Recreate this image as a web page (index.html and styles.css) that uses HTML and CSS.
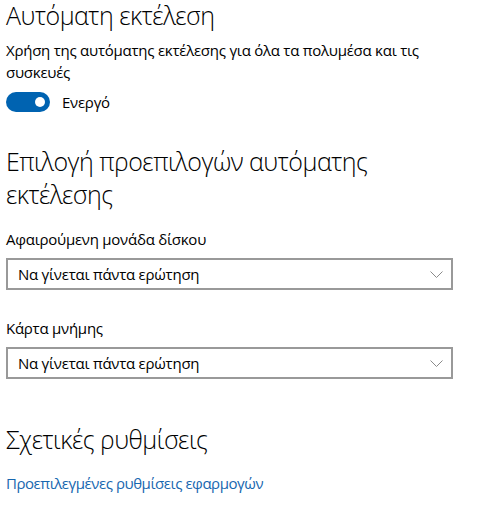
FILE: index.html
```html
<!DOCTYPE html>
<html lang="el">
<head>
<meta charset="utf-8">
<link rel="stylesheet" href="styles.css">
</head>
<body>
<main class="page">
  <h1 class="title">Αυτόματη εκτέλεση</h1>
  <p class="desc">Χρήση της αυτόματης εκτέλεσης για όλα τα πολυμέσα και τις συσκευές</p>
  <div class="toggle-row">
    <span class="toggle"><span class="thumb"></span></span>
    <span class="toggle-label">Ενεργό</span>
  </div>

  <h2 class="heading heading-defaults">Επιλογή προεπιλογών αυτόματης εκτέλεσης</h2>

  <div class="field">
    <div class="field-label">Αφαιρούμενη μονάδα δίσκου</div>
    <div class="select">
      <span class="select-text">Να γίνεται πάντα ερώτηση</span>
      <svg class="chev" width="13" height="7" viewBox="0 0 13 7"><path d="M0.5 0.5 L6.5 6.5 L12.5 0.5" fill="none" stroke="#8a8a8a" stroke-width="1"/></svg>
    </div>
  </div>

  <div class="field">
    <div class="field-label">Κάρτα μνήμης</div>
    <div class="select">
      <span class="select-text">Να γίνεται πάντα ερώτηση</span>
      <svg class="chev" width="13" height="7" viewBox="0 0 13 7"><path d="M0.5 0.5 L6.5 6.5 L12.5 0.5" fill="none" stroke="#8a8a8a" stroke-width="1"/></svg>
    </div>
  </div>

  <h2 class="heading heading-related">Σχετικές ρυθμίσεις</h2>
  <a class="link" href="#">Προεπιλεγμένες ρυθμίσεις εφαρμογών</a>
</main>
</body>
</html>
```

FILE: styles.css
```css
html, body {
  margin: 0;
  padding: 0;
  background: #ffffff;
}

body {
  font-family: "Open Sans", "Noto Sans", "DejaVu Sans", sans-serif;
  color: #000000;
}

.page {
  width: 447px;
  padding: 0 0 0 6px;
}

.title {
  margin: 0;
  font-size: 25px;
  font-weight: 300;
  line-height: 30px;
  letter-spacing: -0.5px;
}

.desc {
  margin: 9px 0 0;
  font-size: 15px;
  line-height: 22px;
  letter-spacing: -0.25px;
  width: 447px;
}

.toggle-row {
  display: flex;
  align-items: center;
  gap: 12px;
  margin-top: 9px;
  height: 20px;
}

.toggle {
  box-sizing: border-box;
  width: 44px;
  height: 20px;
  border-radius: 10px;
  background: #0063b1;
  display: flex;
  align-items: center;
  justify-content: flex-end;
  padding-right: 5px;
}

.thumb {
  width: 10px;
  height: 10px;
  border-radius: 50%;
  background: #ffffff;
}

.toggle-label {
  font-size: 15px;
  letter-spacing: -0.25px;
}

.heading {
  margin: 0;
  font-size: 25px;
  font-weight: 300;
  line-height: 33px;
  letter-spacing: -0.5px;
}

.heading-defaults {
  margin-top: 33px;
  width: 420px;
}

.field {
  margin-top: 18px;
}

.field + .field {
  margin-top: 28px;
}

.field-label {
  font-size: 15px;
  line-height: 20px;
  letter-spacing: -0.25px;
}

.select {
  box-sizing: border-box;
  margin-top: 9px;
  width: 447px;
  height: 32px;
  border: 2px solid #999999;
  display: flex;
  align-items: center;
  justify-content: space-between;
  padding: 0 8px 0 10px;
}

.select-text {
  font-size: 15px;
  letter-spacing: -0.25px;
}

.chev {
  display: block;
}

.heading-related {
  margin-top: 44px;
}

.link {
  display: block;
  margin-top: 17px;
  font-size: 15px;
  line-height: 20px;
  letter-spacing: -0.45px;
  color: #1767b0;
  text-decoration: none;
}
```
